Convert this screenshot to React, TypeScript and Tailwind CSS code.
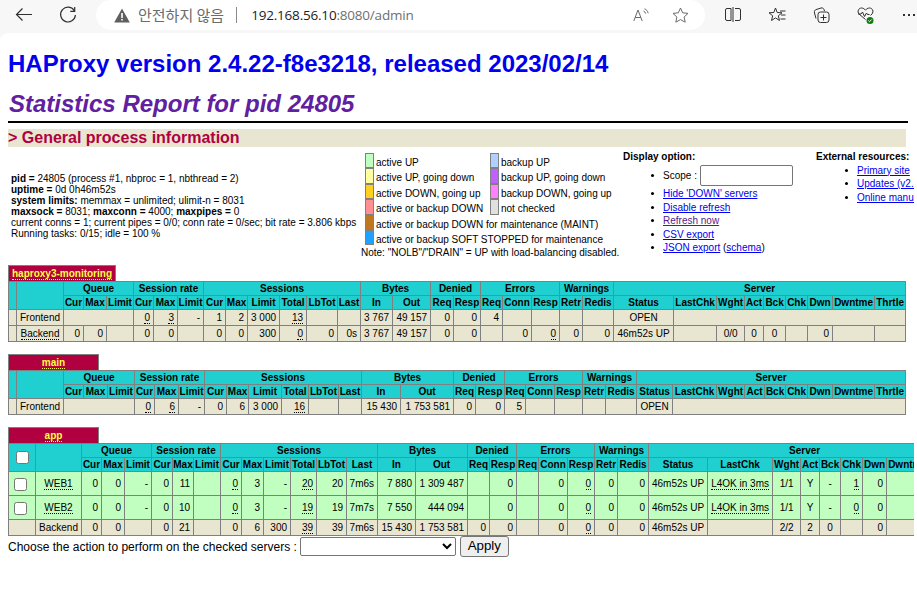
type Cell = string | [string, number];

const HEAD_GROUPS: [string, number][] = [
  ["Queue", 3],
  ["Session rate", 3],
  ["Sessions", 6],
  ["Bytes", 2],
  ["Denied", 2],
  ["Errors", 3],
  ["Warnings", 2],
  ["Server", 9],
];

const HEAD_COLS = [
  "Cur", "Max", "Limit", "Cur", "Max", "Limit", "Cur", "Max", "Limit", "Total", "LbTot", "Last",
  "In", "Out", "Req", "Resp", "Req", "Conn", "Resp", "Retr", "Redis",
  "Status", "LastChk", "Wght", "Act", "Bck", "Chk", "Dwn", "Dwntme", "Thrtle",
];

// column indexes that are centered in the stats rows
const CENTERED = [1, 23, 24, 25, 26, 27];

const monitoring = {
  edges: [8, 16, 63, 83, 106, 133, 153, 177, 203, 225, 247, 279, 306, 337, 360, 392, 430, 453, 480, 502, 531, 559, 582, 613, 673, 716, 744, 763, 785, 807, 832, 874, 905],
  rows: [
    {
      tone: "bg-[#e8e6d0] h-[16px]",
      cells: ["", "Frontend", ["", 3], "~0", "~3", "-", "1", "2", "3 000", "~13", "", "", "3 767", "49 157", "0", "0", "4", "", "", "", "", "OPEN", ["", 8]],
    },
    {
      tone: "bg-[#e8e6d0] h-[16px]",
      cells: ["", "~Backend", "0", "0", "", "0", "0", "", "0", "0", "300", "~0", "0", "0s", "3 767", "49 157", "0", "0", "", "0", "~0", "0", "0", "46m52s UP", "", "0/0", "0", "0", "", "0", "", ""],
    },
  ] as { tone: string; cells: Cell[] }[],
};

const main = {
  edges: [8, 16, 63, 83, 107, 134, 154, 178, 204, 226, 248, 281, 308, 338, 361, 400, 453, 475, 504, 525, 554, 582, 605, 636, 672, 716, 744, 764, 785, 807, 832, 874, 905],
  rows: [
    {
      tone: "bg-[#e8e6d0] h-[16px]",
      cells: ["", "Frontend", ["", 3], "~0", "~6", "-", "0", "6", "3 000", "~16", "", "", "15 430", "1 753 581", "0", "0", "5", "", "", "", "", "OPEN", ["", 8]],
    },
  ] as { tone: string; cells: Cell[] }[],
};

const app = {
  edges: [8, 35, 81, 101, 124, 151, 172, 193, 220, 241, 263, 290, 316, 346, 377, 415, 467, 489, 516, 538, 567, 594, 617, 648, 707, 772, 800, 819, 840, 862, 886, 928, 960],
  rows: [
    {
      tone: "bg-[#c0ffc0] h-[24px]",
      cells: ["[]", "~WEB1", "0", "0", "-", "0", "11", "", "~0", "3", "-", "~20", "20", "7m6s", "7 880", "1 309 487", "", "0", "", "0", "~0", "0", "0", "46m52s UP", "~L4OK in 3ms", "1/1", "Y", "-", "~1", "0", "", ""],
    },
    {
      tone: "bg-[#c0ffc0] h-[24px]",
      cells: ["[]", "~WEB2", "0", "0", "-", "0", "10", "", "~0", "3", "-", "~19", "19", "7m7s", "7 550", "444 094", "", "0", "", "0", "~0", "0", "0", "46m52s UP", "~L4OK in 3ms", "1/1", "Y", "-", "~0", "0", "", ""],
    },
    {
      tone: "bg-[#e8e6d0] h-[16px]",
      cells: ["", "Backend", "0", "0", "", "0", "21", "", "0", "6", "300", "~39", "39", "7m6s", "15 430", "1 753 581", "0", "0", "", "0", "~0", "0", "0", "46m52s UP", "", "2/2", "2", "0", "", "0", "", ""],
    },
  ] as { tone: string; cells: Cell[] }[],
};

const LEGEND_A = [
  ["bg-[#c0ffc0]", "active UP"],
  ["bg-[#ffffa0]", "active UP, going down"],
  ["bg-[#ffd020]", "active DOWN, going up"],
  ["bg-[#ff9090]", "active or backup DOWN"],
  ["bg-[#c07820]", "active or backup DOWN for maintenance (MAINT)"],
  ["bg-[#20a0ff]", "active or backup SOFT STOPPED for maintenance"],
];

const LEGEND_B = [
  ["bg-[#b0d0ff]", "backup UP"],
  ["bg-[#c060ff]", "backup UP, going down"],
  ["bg-[#ff80ff]", "backup DOWN, going up"],
  ["bg-[#e0e0e0]", "not checked"],
];

function Checkbox() {
  return (
    <input
      type="checkbox"
      className="block mx-auto w-[13px] h-[13px] appearance-none bg-white border border-[#767676] rounded-[2.5px]"
    />
  );
}

function Value({ text }: { text: string }) {
  if (text.startsWith("~")) {
    return <span className="border-b border-dotted border-black">{text.slice(1)}</span>;
  }
  return <>{text}</>;
}

function StatsTable({
  name,
  tabWidth,
  edges,
  rows,
  pick,
}: {
  name: string;
  tabWidth: string;
  edges: number[];
  rows: { tone: string; cells: Cell[] }[];
  pick?: boolean;
}) {
  const total = edges[edges.length - 1] - edges[0] + 1;
  return (
    <div>
      <div className={`${tabWidth} text-center whitespace-nowrap h-[17px] bg-[#b00040] border border-[#808080] text-[#ffff40] font-bold text-[10px] leading-[15px]`}>
        <span className="border-b border-dotted border-[#ffff40]">{name}</span>
      </div>
      <table
        className="table-fixed border-collapse text-[10px] leading-[12px] text-black -mt-px"
        style={{ width: total }}
      >
        <colgroup>
          {edges.slice(1).map((edge, i) => (
            <col key={i} style={{ width: edge - edges[i] }} />
          ))}
        </colgroup>
        <tbody>
          <tr className="bg-[#20d0d0] h-[14px] font-bold">
            <th rowSpan={2} className="border border-[#808080] p-0">
              {pick && <Checkbox />}
            </th>
            <th rowSpan={2} className="border border-[#808080] p-0" />
            {HEAD_GROUPS.map(([label, span]) => (
              <th key={label} colSpan={span} className="border border-[#808080] p-0 pt-px font-bold whitespace-nowrap overflow-hidden">
                {label}
              </th>
            ))}
          </tr>
          <tr className="bg-[#20d0d0] h-[14px]">
            {HEAD_COLS.map((label, i) => (
              <th key={i} className="border border-[#808080] p-0 pt-px font-bold whitespace-nowrap overflow-hidden">
                {label}
              </th>
            ))}
          </tr>
          {rows.map((row, r) => {
            let col = 0;
            return (
              <tr key={r} className={row.tone}>
                {row.cells.map((cell, c) => {
                  const [text, span] = typeof cell === "string" ? [cell, 1] : cell;
                  const centered = CENTERED.includes(col);
                  col += span;
                  return (
                    <td
                      key={c}
                      colSpan={span}
                      className={`border border-[#808080] p-0 pt-px whitespace-nowrap overflow-hidden ${centered ? "text-center" : "text-right pr-[3px]"}`}
                    >
                      {text === "[]" ? <Checkbox /> : <Value text={text} />}
                    </td>
                  );
                })}
              </tr>
            );
          })}
        </tbody>
      </table>
    </div>
  );
}

function Toolbar() {
  return (
    <div className="h-[33px] bg-[#f7f7f7] flex items-start relative shrink-0">
      <svg className="ml-[15px] mt-[7px]" width="18" height="16" viewBox="0 0 18 16" fill="none" stroke="#303030" strokeWidth="1.2">
        <path d="M17 7.500H1.500M7.500 1.500 1.500 7.500 7.500 13.500" />
      </svg>
      <svg className="ml-[26px] mt-[6px]" width="18" height="18" viewBox="0 0 18 18" fill="none" stroke="#303030" strokeWidth="1.2">
        <path d="M15.500 5A7.400 7.400 0 1 0 16.400 9" />
        <path d="M15.700 1v4.400h-4.400" />
      </svg>
      <div className="ml-[19px] w-[609px] h-[30px] bg-white rounded-[16px] flex items-center">
        <svg className="ml-[18px]" width="16" height="15" viewBox="0 0 16 15">
          <path d="M8 .5 15.800 14.500H.2Z" fill="#5f5f5f" />
          <path d="M7.200 5h1.600v5H7.200zM7.200 11h1.600v1.600H7.200z" fill="#fff" />
        </svg>
        <span className="ml-[8px] text-[15px] text-[#6b6b6b] font-['Noto_Sans_CJK_KR',sans-serif]">안전하지 않음</span>
        <span className="ml-[12px] h-[16px] w-px bg-[#8a8a8a]" />
        <span className="ml-[14px] text-[13.500px] text-[#1c1c1c] font-['Open_Sans',sans-serif] tracking-[-0.2px]">
          192.168.56.10<span className="text-[#6f6f6f]">:8080/admin</span>
        </span>
        <svg className="ml-auto" width="16" height="14" viewBox="0 0 16 14" fill="none" stroke="#6a6a6a" strokeWidth="1">
          <path d="M.8 13 5 2l4.200 11M2.200 9.500h5.600" />
          <path d="M10.500 3c1.200.5 1.900 1.400 2.200 2.600M11.500 .8c2 .8 3.200 2.300 3.700 4.400" />
        </svg>
        <svg className="ml-[23px] mr-[16px]" width="17" height="16" viewBox="0 0 17 16" fill="none" stroke="#6a6a6a" strokeWidth="1">
          <path d="M8.500 1 10.700 5.800 16 6.400 12.100 10 13.200 15.200 8.500 12.600 3.800 15.200 4.900 10 1 6.400 6.300 5.800Z" />
        </svg>
      </div>
      <svg className="ml-[20px] mt-[7px]" width="16" height="15" viewBox="0 0 16 15" fill="none" stroke="#303030" strokeWidth="1">
        <path d="M6 1.500H2A1.500 1.500 0 0 0 .5 3v9A1.500 1.500 0 0 0 2 13.500h4ZM8 0v15M10 1.500h4A1.500 1.500 0 0 1 15.500 3v9A1.500 1.500 0 0 1 14 13.500h-4" />
      </svg>
      <svg className="ml-[28px] mt-[7px]" width="17" height="16" viewBox="0 0 17 16" fill="none" stroke="#303030" strokeWidth="1">
        <path d="M6.500 1 8.200 5.500 13 5.800 9.300 8.800 10.500 13.500 6.500 10.900 2.500 13.500 3.700 8.800 0 5.800 4.800 5.500Z" />
        <path d="M11 4h5.500M12 8h4.500M11.500 12h5" />
      </svg>
      <svg className="ml-[27px] mt-[7px]" width="17" height="16" viewBox="0 0 17 16" fill="none" stroke="#303030" strokeWidth="1">
        <path d="M3 11.500 1.500 6C1 4 2 3 3 2.600L8 1c1.500-.4 2.500.3 3 1.500l.5 1.500" />
        <rect x="5" y="5" width="11" height="10.500" rx="2.500" />
        <path d="M10.500 7.500v6M7.500 10.500h6" />
      </svg>
      <svg className="ml-[27px] mt-[7px]" width="17" height="17" viewBox="0 0 17 17" fill="none" stroke="#303030" strokeWidth="1">
        <path d="M8.500 12.500 2 7C0 4.500 1.500 1 4.500 1c1.800 0 3 1 4 2.200C9.500 2 10.700 1 12.500 1c3 0 4.500 3.500 2.500 6l-1.500 1.500" />
        <path d="M1 7h3l1.500-2 2 4.500L9.500 6l1 1.500h2" />
        <circle cx="13" cy="13.500" r="3.500" fill="#107c10" stroke="none" />
        <path d="M11.300 13.500l1.200 1.200 2.200-2.200" stroke="#fff" />
      </svg>
      <div className="ml-[29px] mt-[14px] flex gap-[3px]">
        <span className="w-[2px] h-[2px] bg-[#303030]" />
        <span className="w-[2px] h-[2px] bg-[#303030]" />
        <span className="w-[2px] h-[2px] bg-[#303030]" />
      </div>
    </div>
  );
}

function Bullet({ children, className }: { children: React.ReactNode; className: string }) {
  return (
    <li className={`flex items-center ${className}`}>
      <span className="w-[3px] h-[3px] rounded-full bg-black mr-[9px] shrink-0" />
      {children}
    </li>
  );
}

function Anchor({ children, visited }: { children: React.ReactNode; visited?: boolean }) {
  return <a className={`underline ${visited ? "text-[#551a8b]" : "text-[#0000ee]"}`}>{children}</a>;
}

function LegendColumn({ items }: { items: string[][] }) {
  return (
    <div className="pt-px">
      {items.map(([tone, label]) => (
        <div key={label} className="flex h-[15.400px] whitespace-nowrap">
          <span className={`${tone} w-[9px] h-full border border-[#808080] mr-[2px] shrink-0`} />
          <span className="pt-[4px]">{label}</span>
        </div>
      ))}
    </div>
  );
}

function InfoBlock() {
  return (
    <div className="flex h-[113px] mt-[5px] text-[10px] text-black leading-[11px]">
      <div className="w-[357px] shrink-0 pl-[3px] pt-[21px]">
        <p><b>pid = </b>24805 (process #1, nbproc = 1, nbthread = 2)</p>
        <p><b>uptime = </b>0d 0h46m52s</p>
        <p><b>system limits:</b> memmax = unlimited; ulimit-n = 8031</p>
        <p><b>maxsock = </b>8031; <b>maxconn = </b>4000; <b>maxpipes = </b>0</p>
        <p className="whitespace-nowrap">current conns = 1; current pipes = 0/0; conn rate = 0/sec; bit rate = 3.806 kbps</p>
        <p>Running tasks: 0/15; idle = 100 %</p>
      </div>
      <div className="w-[258px] shrink-0">
        <div className="flex">
          <div className="w-[125px] shrink-0">
            <LegendColumn items={LEGEND_A} />
          </div>
          <LegendColumn items={LEGEND_B} />
        </div>
        <p className="whitespace-nowrap -ml-[4px] mt-[2px]">Note: "NOLB"/"DRAIN" = UP with load-balancing disabled.</p>
      </div>
      <div className="w-[193px] shrink-0">
        <b className="block -mt-px">Display option:</b>
        <ul className="pl-[28px] mt-[2px]">
          <Bullet className="h-[22px]">
            Scope :<span className="ml-[3px] w-[93px] h-[21px] border border-[#767676] rounded-[2px] bg-white" />
          </Bullet>
          <Bullet className="h-[14px]"><Anchor>Hide 'DOWN' servers</Anchor></Bullet>
          <Bullet className="h-[14px]"><Anchor>Disable refresh</Anchor></Bullet>
          <Bullet className="h-[13px]"><Anchor visited>Refresh now</Anchor></Bullet>
          <Bullet className="h-[14px]"><Anchor>CSV export</Anchor></Bullet>
          <Bullet className="h-[13px]">
            <span><Anchor>JSON export</Anchor> (<Anchor>schema</Anchor>)</span>
          </Bullet>
        </ul>
      </div>
      <div className="shrink-0 whitespace-nowrap">
        <b className="block -mt-px">External resources:</b>
        <ul className="pl-[29px] mt-px">
          <Bullet className="h-[14px]"><Anchor>Primary site</Anchor></Bullet>
          <Bullet className="h-[13px]"><Anchor>Updates (v2.4)</Anchor></Bullet>
          <Bullet className="h-[14px]"><Anchor>Online manual</Anchor></Bullet>
        </ul>
      </div>
    </div>
  );
}

export default function App() {
  return (
    <div className="w-[917px] h-[603px] overflow-hidden bg-[#f7f7f7] flex flex-col font-['Liberation_Sans',Arial,sans-serif]">
      <Toolbar />
      <div className="flex-1 bg-white rounded-tl-[8px] overflow-hidden">
        <div className="w-[914px] h-full overflow-hidden pl-[8px]">
          <h1 className="mt-[16px] h-[30px] text-[24px] leading-[30px] font-bold text-[#0000ee] whitespace-nowrap">
            HAProxy version 2.4.22-f8e3218, released 2023/02/14
          </h1>
          <h2 className="mt-[10px] ml-px h-[30px] text-[24px] leading-[30px] font-bold italic text-[#6020a0]">
            Statistics Report for pid 24805
          </h2>
          <div className="mt-[2px] w-[900px] h-[2px] bg-black" />
          <h3 className="mt-[6px] w-[898px] h-[18px] bg-[#e8e6d0] text-[16px] leading-[18px] font-bold text-[#b00040]">
            &gt; General process information
          </h3>
          <InfoBlock />
          <StatsTable name="haproxy3-monitoring" tabWidth="w-[108px]" edges={monitoring.edges} rows={monitoring.rows} />
          <div className="mt-[12px]">
            <StatsTable name="main" tabWidth="w-[91px]" edges={main.edges} rows={main.rows} />
          </div>
          <div className="mt-[12px]">
            <StatsTable name="app" tabWidth="w-[91px]" edges={app.edges} rows={app.rows} pick />
          </div>
          <div className="flex items-center h-[22px] text-[12px]">
            Choose the action to perform on the checked servers :
            <select className="ml-[3px] mb-[2px] w-[156px] h-[19px] bg-white border border-[#767676] rounded-[2px]">
              <option value=""></option>
            </select>
            <button className="ml-[4px] mb-[2px] w-[49px] h-[21px] bg-[#efefef] border border-[#767676] rounded-[3px] text-[13.330px] leading-[18px]">
              Apply
            </button>
          </div>
        </div>
      </div>
    </div>
  );
}
